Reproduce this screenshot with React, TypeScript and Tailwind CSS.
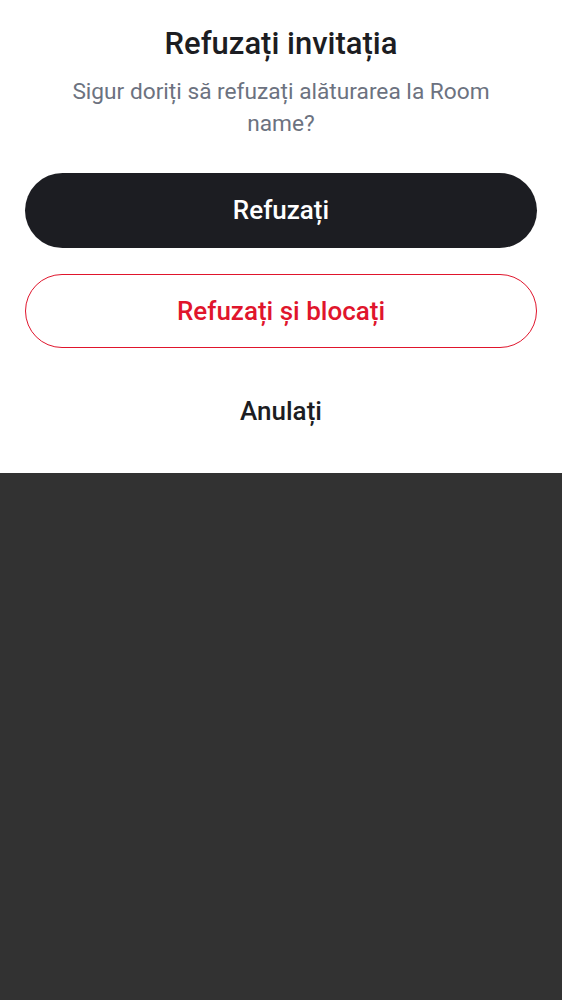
import React from "react";

const App = () => {
  return (
    <div className="min-h-screen bg-[#323232] font-['Roboto',sans-serif]">
      <div className="bg-white px-[25px] pt-[24px] pb-[25px]">
        {/* Header */}
        <h1 className="text-center text-[31px] leading-[40px] font-medium text-[#1c1d22]">
          Refuzați invitația
        </h1>
        <p className="mx-auto mt-[12px] max-w-[460px] text-center text-[22.7px] leading-[32px] text-[#6c7280]">
          Sigur doriți să refuzați alăturarea la Room name?
        </p>

        {/* Actions */}
        <div className="mt-[33px] flex flex-col gap-[26px]">
          <button className="h-[75px] w-full rounded-full bg-[#1c1d22] text-[26px] font-medium text-white">
            Refuzați
          </button>
          <button className="h-[74px] w-full rounded-full border border-[#e0152c] bg-white text-[26px] font-medium text-[#e0152c]">
            Refuzați și blocați
          </button>
          <button className="h-[74px] w-full rounded-full text-[26px] font-medium text-[#1c1d22]">
            Anulați
          </button>
        </div>
      </div>
    </div>
  );
};

export default App;
